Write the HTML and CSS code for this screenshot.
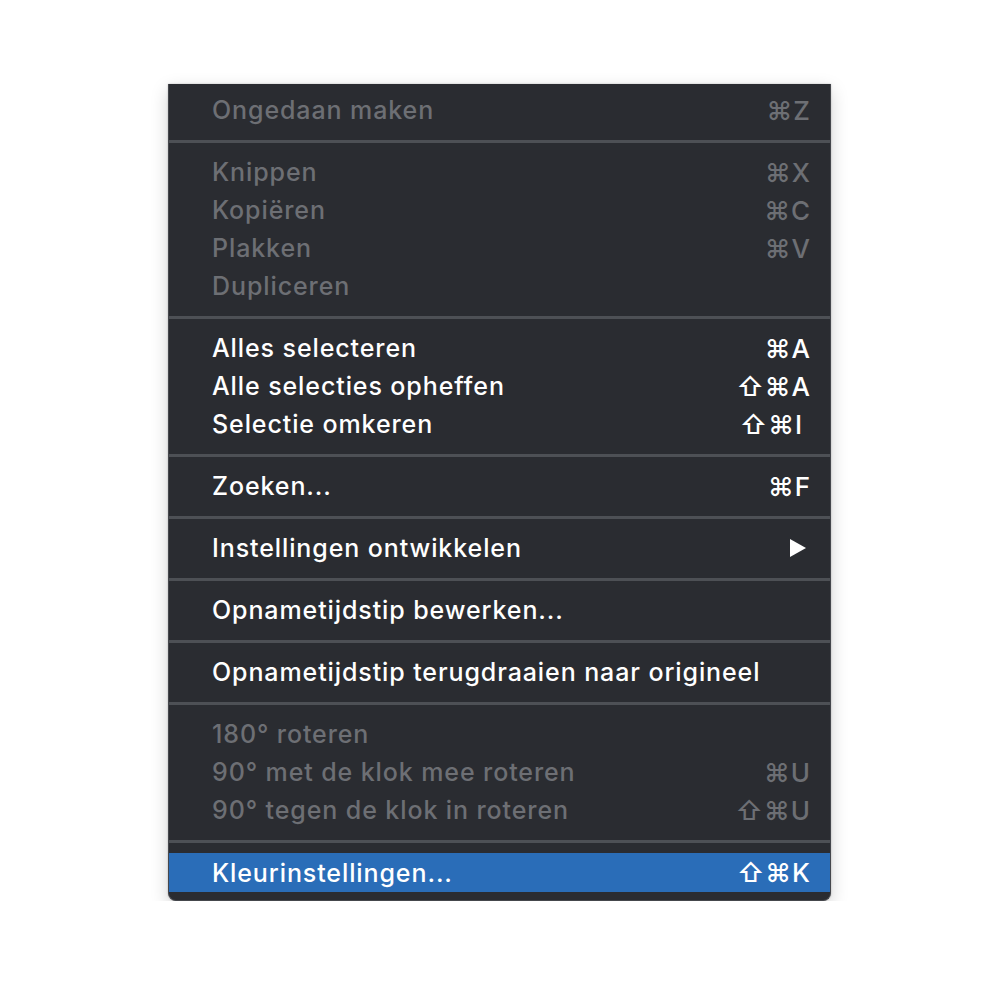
FILE: index.html
```html
<!DOCTYPE html>
<html>
<head>
<meta charset="utf-8">
<link rel="stylesheet" href="styles.css">
</head>
<body>
<div class="menu">
  <div class="item disabled"><span class="label">Ongedaan maken</span><span class="key">⌘Z</span></div>
  <div class="sep"></div>
  <div class="item disabled"><span class="label">Knippen</span><span class="key">⌘X</span></div>
  <div class="item disabled"><span class="label">Kopiëren</span><span class="key">⌘C</span></div>
  <div class="item disabled"><span class="label">Plakken</span><span class="key">⌘V</span></div>
  <div class="item disabled"><span class="label">Dupliceren</span></div>
  <div class="sep"></div>
  <div class="item"><span class="label">Alles selecteren</span><span class="key">⌘A</span></div>
  <div class="item"><span class="label">Alle selecties opheffen</span><span class="key">⇧⌘A</span></div>
  <div class="item"><span class="label">Selectie omkeren</span><span class="key">⇧⌘I&nbsp;</span></div>
  <div class="sep"></div>
  <div class="item"><span class="label">Zoeken...</span><span class="key">⌘F</span></div>
  <div class="sep"></div>
  <div class="item"><span class="label">Instellingen ontwikkelen</span><span class="arrow"></span></div>
  <div class="sep"></div>
  <div class="item"><span class="label">Opnametijdstip bewerken...</span></div>
  <div class="sep"></div>
  <div class="item"><span class="label">Opnametijdstip terugdraaien naar origineel</span></div>
  <div class="sep"></div>
  <div class="item disabled"><span class="label">180° roteren</span></div>
  <div class="item disabled"><span class="label">90° met de klok mee roteren</span><span class="key">⌘U</span></div>
  <div class="item disabled"><span class="label">90° tegen de klok in roteren</span><span class="key">⇧⌘U</span></div>
  <div class="sep"></div>
  <div class="item active"><span class="label">Kleurinstellingen...</span><span class="key">⇧⌘K</span></div>
</div>
</body>
</html>
```

FILE: styles.css
```css
html, body {
  margin: 0;
  padding: 0;
  background: #ffffff;
}

body {
  font-family: Inter, "Noto Sans", "DejaVu Sans", sans-serif;
}

.menu {
  margin: 84px 0 0 168px;
  width: 661px;
  padding: 7px 0 8px;
  background: #2a2c31;
  border: 1px solid #45474c;
  border-top: none;
  border-radius: 0 0 8px 8px;
  box-shadow: 0 6px 18px rgba(0, 0, 0, 0.18), 0 0 2px rgba(0, 0, 0, 0.25);
}

.item {
  height: 38px;
  display: flex;
  align-items: center;
  justify-content: space-between;
  padding: 0 19px 0 43px;
  font-size: 25px;
  font-weight: 500;
  color: #ffffff;
  letter-spacing: 0.9px;
}

.item.disabled {
  color: #6d6f74;
}

.item.active {
  background: #2a6db8;
  height: 39px;
}

.key {
  font-family: Inter, "DejaVu Sans", sans-serif;
  font-size: 26px;
  letter-spacing: 1px;
}

.arrow {
  width: 0;
  height: 0;
  border-left: 16px solid #ffffff;
  border-top: 9px solid transparent;
  border-bottom: 9px solid transparent;
  margin-right: 5px;
}

.sep {
  height: 24px;
  display: flex;
  align-items: center;
}

.sep::before {
  content: "";
  display: block;
  width: 100%;
  height: 3px;
  background: #4d5055;
}
```
